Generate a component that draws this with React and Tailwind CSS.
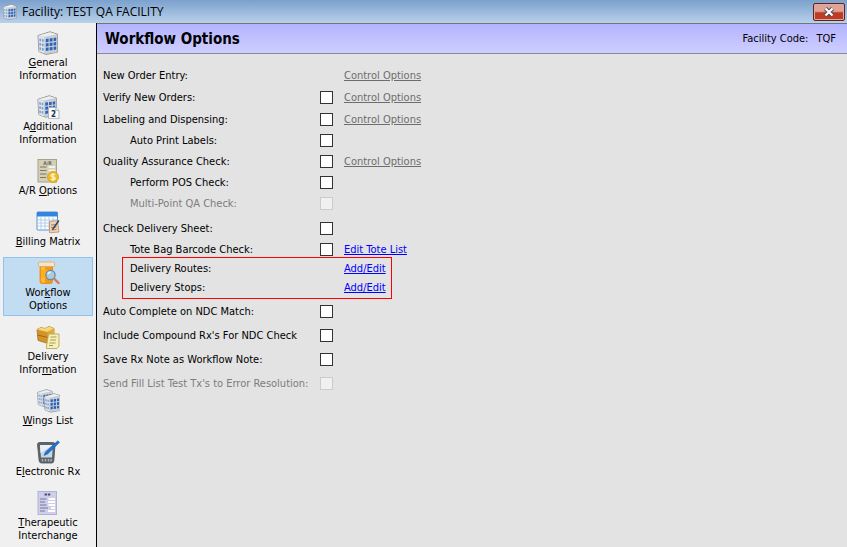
import React from 'react';

function Building({ x = 0, y = 0, scale = 1 }) {
    return (
        <g transform={`translate(${x} ${y}) scale(${scale})`}>
            <path d="M2 4.5 14 .8l7.500 2.400v18L10 23.400 3 20.600z" fill="#c4c9ce" stroke="#85898e" strokeWidth=".9" />
            <path d="M2.400 4.600 8.500 6v16.500L3.200 20.400z" fill="#dfe3e7" />
            <path d="M8.500 6 21.300 3.600v17.600L9 22.900z" fill="#c9ced3" />
            <path d="M2.600 4.500 14 1.200l6.800 2L8.500 5.800z" fill="#eceef0" />
            {[8, 12.4, 16.8].map((top) => (
                <g key={top}>
                    <path d={`M3.400 ${top - 0.6}l1.700.4v2.600l-1.700-.4zM6 ${top}l1.700.4v2.600l-1.700-.4z`} fill="#7ba0d0" />
                    <path d={`M9.800 ${top}l2.800-.4v3.200l-2.800.4zM13.700 ${top - 0.5}l2.800-.4v3.200l-2.800.4zM17.600 ${top - 1}l2.600-.4v3.200l-2.600.4z`} fill="#2a63bd" />
                </g>
            ))}
        </g>
    );
}

function BuildingIcon() {
    return <Building />;
}

function AdditionalIcon() {
    return (
        <>
            <Building scale={0.95} />
            <path d="M12.5 12.5h7l3.500 3v8.200H12.5z" fill="#f8fafc" stroke="#9aa7b8" strokeWidth=".8" />
            <path d="M19.5 12.5v3H23" fill="#d6e0ec" stroke="#9aa7b8" strokeWidth=".6" />
            <text x="17.4" y="22" textAnchor="middle" fontSize="8" fontWeight="bold" fill="#1f2c44">2</text>
        </>
    );
}

function AccountsIcon() {
    return (
        <>
            <rect x="2" y=".5" width="18.5" height="22.5" fill="#d3cfb8" stroke="#a5a18a" />
            <text x="11.5" y="5.6" textAnchor="middle" fontSize="5" fontWeight="bold" fill="#6e6a58">A/R</text>
            <path d="M4 8h6.5M4 11.5h6.5M4 15h6.5M4 18.500h6" stroke="#7d795f" strokeWidth="1.2" />
            <path d="M12.5 8H19M12.5 11.5H19M12.5 15H19" stroke="#f6f4e6" strokeWidth="2" />
            <circle cx="17" cy="18" r="5.5" fill="#eebb2a" stroke="#d59d18" strokeWidth=".8" />
            <path d="M19.100 15.900c-1-1.200-4-.9-4 .7 0 1.800 4 1 4 2.900 0 1.600-3.200 1.700-4.200.4M17 14.300v7.500" fill="none" stroke="#fff6c8" strokeWidth="1.3" />
        </>
    );
}

function BillingIcon() {
    return (
        <>
            <rect x="1" y="2" width="20.5" height="18" rx="1" fill="#fff" stroke="#5a92cf" />
            <path d="M1 2h20.5v4.500H1z" fill="#2f86dc" />
            <path d="M1.5 10h19.5M1.5 13h19.5M1.5 16h19.5M5 7v12.5M9 7v12.5M13 7v12.5M17 7v12.5" stroke="#a9c8e6" strokeWidth=".9" />
            <path d="m13.5 11.5 8-1L23 22l-9.500.8z" fill="#efd2b6" stroke="#b98c68" strokeWidth=".8" />
            <path d="m15 15 5-.5M15 17.5l5.5-.5M15.5 20l5-.5" stroke="#b77c63" />
            <path d="m23.5 11-6 8.500-1.500.8.3-1.800 6-8.500z" fill="#2b456b" />
        </>
    );
}

function WorkflowIcon() {
    return (
        <>
            <path d="M4 5h12.5v15.5a2 2 0 0 1-2 2H6a2 2 0 0 1-2-2z" fill="#f39a10" stroke="#e08a0a" strokeWidth=".8" />
            <path d="M5 5.5h4v16.300H7a2 2 0 0 1-2-2z" fill="#ffb93c" />
            <path d="M5 9h11v8H5z" fill="#ffad26" />
            <rect x="2.5" y="1" width="16" height="4.5" rx="1" fill="#f6e3cb" stroke="#d8a870" strokeWidth=".8" />
            <path d="m18 17.500 4.500 4.500" stroke="#d9795a" strokeWidth="2.4" strokeLinecap="round" />
            <circle cx="14.5" cy="14" r="4.6" fill="#a8cde2" stroke="#71889a" strokeWidth="1.3" />
            <path d="M11.800 13.200a3 3 0 0 1 3-2" stroke="#e9f7ff" strokeWidth="1.2" fill="none" />
        </>
    );
}

function DeliveryIcon() {
    return (
        <>
            <path d="M1 4.500 5 2.500l4 1 4-2 5 2v11.500l-6 3.500-10-3z" fill="#d2942a" stroke="#a56d0e" strokeWidth=".7" />
            <path d="m1 4.500 4-2 4 1 4-2 5 2-6.500 3.500z" fill="#f5d67c" />
            <path d="M11.500 7 18 3.500V15l-6 3.500z" fill="#e3aa38" />
            <path d="m1.500 10 10.200 2.500L18 9" stroke="#9c680f" fill="none" />
            <path d="M12.500 9H23v12l-2 2.500H10.500V21z" fill="#f7f0b4" stroke="#b5a55a" strokeWidth=".9" />
            <path d="M14.500 12h6M14 15h6M13.500 18h6M13 20.500h4" stroke="#a39a5a" />
        </>
    );
}

function WingsIcon() {
    return (
        <>
            <Building scale={0.75} />
            <Building x={6.5} y={4} scale={0.82} />
        </>
    );
}

function TabletIcon() {
    return (
        <>
            <path d="M1.500 4.500q0-2 2-2H17q2 0 2 2L17.800 21q-.3 2-2 2H5.500q-2 0-2.300-2z" fill="#5c656d" stroke="#4a5157" strokeWidth=".8" />
            <path d="M4 5h12.800l-.8 12.500H5z" fill="#c6d8e6" />
            <path d="M4 5h12.800L4.500 13z" fill="#e6f0f6" />
            <path d="M6.500 19v2.500M9.500 19v2.500M12.500 19v2.500M15 19v2.500" stroke="#a5b0ba" strokeWidth="1.5" />
            <path d="m8 15.500 1.600-3.700L21.800.8l1.700 1.700L11.500 14z" fill="#2573d0" stroke="#174f9c" strokeWidth=".5" />
        </>
    );
}

function TherapeuticIcon() {
    return (
        <>
            <rect x="2" y=".5" width="18.5" height="23" fill="#cfcfea" stroke="#b2b2d6" />
            <path d="M8.500 3.500h6" stroke="#4d4d79" strokeWidth="2" strokeDasharray="2.500 .8" />
            <path d="M4 8h6.500M4 11h5M4 14h6.500M4 17h8M4 20h5" stroke="#74749c" />
            <path d="M12.500 8H19M12 11h7M12.500 14H19M15 17h4M12 20h7" stroke="#fff" strokeWidth="2" />
        </>
    );
}

// each line is [before, access letter, after]
const menu = [
    { Icon: BuildingIcon, lines: [['', 'G', 'eneral'], ['Information']] },
    { Icon: AdditionalIcon, lines: [['A', 'd', 'ditional'], ['Information']] },
    { Icon: AccountsIcon, lines: [['A/R ', 'O', 'ptions']] },
    { Icon: BillingIcon, lines: [['', 'B', 'illing Matrix']] },
    { Icon: WorkflowIcon, lines: [['Wor', 'k', 'flow'], ['Options']], active: true },
    { Icon: DeliveryIcon, lines: [['Delivery'], ['Infor', 'm', 'ation']] },
    { Icon: WingsIcon, lines: [['', 'W', 'ings List']] },
    { Icon: TabletIcon, lines: [['E', 'l', 'ectronic Rx']] },
    { Icon: TherapeuticIcon, lines: [['', 'T', 'herapeutic'], ['Interchange']] },
];

function MenuItem({ Icon, lines, active }) {
    return (
        <button
            type="button"
            className={`flex w-full flex-col items-center gap-px border py-[3px] ${
                active ? 'border-[#90c4f0] bg-[#c2dcf2]' : 'border-transparent'
            }`}
        >
            <svg viewBox="0 0 24 24" className="size-6" aria-hidden="true">
                <Icon />
            </svg>
            <span className="text-center leading-[13px]">
                {lines.map(([before, letter, after], i) => (
                    <span key={i} className="block whitespace-nowrap">
                        {before}
                        {letter && <u>{letter}</u>}
                        {after}
                    </span>
                ))}
            </span>
        </button>
    );
}

function Option({ id, label, link, linkActive, sub, disabled, noBox, className }) {
    return (
        <div className={`grid grid-cols-[217px_24px_auto] items-center justify-start ${className}`}>
            {noBox ? (
                <>
                    <span>{label}</span>
                    <span />
                </>
            ) : (
                <>
                    <label htmlFor={id} className={`whitespace-nowrap ${sub ? 'pl-[27px]' : ''} ${disabled ? 'text-[#7c7c7c]' : ''}`}>
                        {label}
                    </label>
                    <input
                        id={id}
                        type="checkbox"
                        disabled={disabled}
                        className="size-[13px] appearance-none border border-[#333] bg-white checked:bg-[#333] disabled:border-[#ccc] disabled:bg-[#f0f0f0]"
                    />
                </>
            )}
            {link && (
                <a href="#" className={`underline ${linkActive ? 'text-[#0000ff]' : 'text-[#6d6d6d]'}`}>
                    {link}
                </a>
            )}
        </div>
    );
}

export default function App() {
    return (
        <div className="flex min-h-screen flex-col bg-[#e3e3e3] font-['DejaVu_Sans_Condensed','DejaVu_Sans',sans-serif] text-[11px] leading-[13px] text-black">
            <header className="flex h-[23px] items-center justify-between bg-linear-to-b from-[#7ba1cd] to-[#b9d1ea] px-[2px]">
                <div className="flex items-center gap-1 font-['Open_Sans',sans-serif] text-xs">
                    <svg viewBox="0 0 24 24" className="size-4" aria-hidden="true">
                        <BuildingIcon />
                    </svg>
                    <span>Facility: TEST QA FACILITY</span>
                </div>
                <button
                    type="button"
                    aria-label="Close"
                    className="flex h-[18px] w-8 items-center justify-center rounded-[2px] border border-[#5a2623] bg-linear-to-b from-[#e0a398] from-45% to-[#bd3c25] to-55% inset-ring inset-ring-[#e6a598]"
                >
                    <svg viewBox="0 0 12 10" className="h-[10px] w-3" aria-hidden="true">
                        <path d="m2.500 1.500 7 7m0-7-7 7" stroke="#4a4a55" strokeWidth="4" />
                        <path d="m2.500 1.500 7 7m0-7-7 7" stroke="#fff" strokeWidth="2.2" />
                    </svg>
                </button>
            </header>

            <div className="flex grow">
                <nav className="flex w-[97px] shrink-0 flex-col gap-[5px] border-r border-black bg-[#f0f0f0] px-[3px] pt-1">
                    {menu.map((item, i) => (
                        <MenuItem key={i} {...item} />
                    ))}
                </nav>

                <main className="grow">
                    <div className="flex h-[31px] items-center justify-between border-t border-b border-t-[#70747c] border-b-[#8a8a9a] bg-linear-to-b from-[#b4b4ff] to-[#ceceff] pr-[11px] pl-2">
                        <h1 className="text-[15px] leading-5 font-bold">Workflow Options</h1>
                        <p className="flex gap-2">
                            <span>Facility Code:</span>
                            <span>TQF</span>
                        </p>
                    </div>

                    <form className="pt-[10px] pl-[6px]">
                        <Option className="h-[22px]" label="New Order Entry:" noBox link="Control Options" />
                        <Option className="h-[22px]" id="verify" label="Verify New Orders:" link="Control Options" />
                        <Option className="h-[22px]" id="labeling" label="Labeling and Dispensing:" link="Control Options" />
                        <Option className="h-[21px]" id="autoprint" label="Auto Print Labels:" sub />
                        <Option className="h-[21px]" id="quality" label="Quality Assurance Check:" link="Control Options" />
                        <Option className="h-[21px]" id="pos" label="Perform POS Check:" sub />
                        <Option className="h-[21px]" id="multipoint" label="Multi-Point QA Check:" sub disabled />
                        <Option className="mt-1 h-[21px]" id="sheet" label="Check Delivery Sheet:" />
                        <Option className="h-[21px]" id="tote" label="Tote Bag Barcode Check:" sub link="Edit Tote List" linkActive />

                        <div className="-mt-[3px] ml-[19px] w-[270px] border border-[#ff0000] py-px pl-[7px]">
                            {['Delivery Routes:', 'Delivery Stops:'].map((label) => (
                                <div key={label} className="grid h-[19px] grid-cols-[214px_auto] items-center justify-start">
                                    <span>{label}</span>
                                    <a href="#" className="text-[#0000ff] underline">Add/Edit</a>
                                </div>
                            ))}
                        </div>

                        <Option className="h-6" id="autocomplete" label="Auto Complete on NDC Match:" />
                        <Option className="h-6" id="compound" label="Include Compound Rx's For NDC Check" />
                        <Option className="h-6" id="rxnote" label="Save Rx Note as Workflow Note:" />
                        <Option className="h-6" id="filllist" label="Send Fill List Test Tx's to Error Resolution:" disabled />
                    </form>
                </main>
            </div>
        </div>
    );
}
